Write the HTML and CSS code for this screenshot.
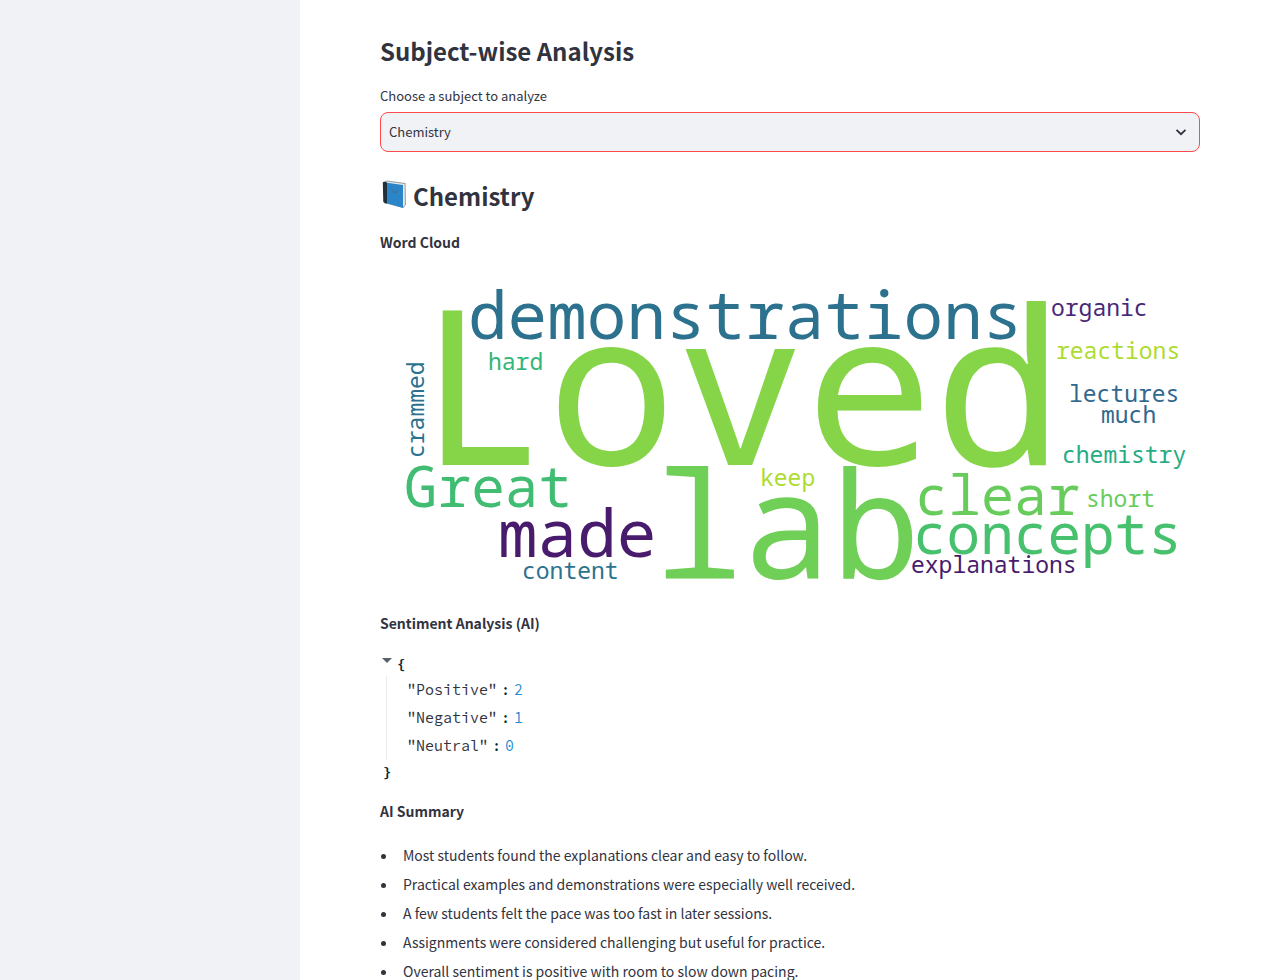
FILE: index.html
```html
<!DOCTYPE html>
<html lang="en">
<head>
    <meta charset="UTF-8">
    <meta name="viewport" content="width=device-width, initial-scale=1.0">
    <title>Subject-wise Analysis</title>
    <link rel="stylesheet" href="styles.css">
</head>
<body>
    <div class="app">
        <aside class="sidebar"></aside>
        <main class="content">
            <h2>Subject-wise Analysis</h2>

            <div class="field">
                <label for="subject">Choose a subject to analyze</label>
                <div class="select-box">
                    <select id="subject">
                        <option selected>Chemistry</option>
                    </select>
                    <svg class="chevron" viewBox="0 0 16 16" aria-hidden="true">
                        <path d="M3.5 5.8L8 10.2l4.5-4.4" />
                    </svg>
                </div>
            </div>

            <h2 class="subject-title">
                <svg class="book" viewBox="0 0 28 32" aria-hidden="true">
                    <path fill="#9aa3a8" d="M3 3l4-1.600L25.600 4l.4 21.500-2.500 3.500L4 24z" />
                    <path fill="#e8ecee" d="M6 2.600L24.500 5l.3 21-1.500 1.500L6 22z" />
                    <path fill="#2a86c8" d="M5.500 3.500l17.500 2.600v23L5.800 24z" />
                    <path fill="#22303c" d="M2.800 3.200l3-.4 1.200 1v20.500l-1.500.3-2.200-1.600z" />
                    <path fill="none" stroke="#3d6f92" d="M10.500 9.500l3 1.500m2 1l3-.5M12 12.500l5 1.500" />
                </svg>
                Chemistry
            </h2>

            <p class="section-title">Word Cloud</p>
            <svg class="cloud" viewBox="0 1 820 326" role="img" aria-label="Word cloud">
                <text class="lime" x="38" y="195" font-size="215">Loved</text>
                <text class="teal" x="88" y="69" font-size="66">demonstrations</text>
                <text class="leaf" x="274" y="309" font-size="148">lab</text>
                <text class="green" x="24" y="237" font-size="56">Great</text>
                <text class="purple" x="118" y="287" font-size="66">made</text>
                <text class="fern" x="535" y="245" font-size="55">clear</text>
                <text class="emerald" x="533" y="284" font-size="56">concepts</text>
                <text class="indigo" x="671" y="46" font-size="23">organic</text>
                <text class="yellow" x="676" y="89" font-size="23">reactions</text>
                <text class="blue" x="689" y="132" font-size="23">lectures</text>
                <text class="blue" x="721" y="153" font-size="23">much</text>
                <text class="sea" x="682" y="193" font-size="23">chemistry</text>
                <text class="fern" x="706" y="237" font-size="23">short</text>
                <text class="purple" x="531" y="303" font-size="23">explanations</text>
                <text class="yellow" x="380" y="216" font-size="23">keep</text>
                <text class="jade" x="108" y="100" font-size="23">hard</text>
                <text class="teal" x="142" y="309" font-size="23">content</text>
                <text class="teal" transform="translate(44 188) rotate(-90)" font-size="23">crammed</text>
            </svg>

            <p class="section-title">Sentiment Analysis (AI)</p>
            <details class="json" open>
                <summary><span class="arrow"></span><span class="brace">{</span></summary>
                <ul class="json-body">
                    <li><span class="key">"Positive"</span><span>:</span><span class="num">2</span></li>
                    <li><span class="key">"Negative"</span><span>:</span><span class="num">1</span></li>
                    <li><span class="key">"Neutral"</span><span>:</span><span class="num">0</span></li>
                </ul>
                <div class="brace brace-end">}</div>
            </details>

            <p class="section-title">AI Summary</p>
            <ul class="summary">
                <li>Most students found the explanations clear and easy to follow.</li>
                <li>Practical examples and demonstrations were especially well received.</li>
                <li>A few students felt the pace was too fast in later sessions.</li>
                <li>Assignments were considered challenging but useful for practice.</li>
                <li>Overall sentiment is positive with room to slow down pacing.</li>
            </ul>
        </main>
    </div>
</body>
</html>
```
FILE: styles.css
```css
* {
    box-sizing: border-box;
}
body {
    margin: 0;
    font-family: "Source Sans Pro", "Noto Sans CJK SC", sans-serif;
    font-size: 14px;
    line-height: 24px;
    color: #31333f;
    background: #fff;
}
.app {
    display: flex;
    height: 100vh;
}
.sidebar {
    flex: 0 0 300px;
    background: #f0f2f6;
}
.content {
    flex: 1;
    min-width: 0;
    padding: 31px 80px;
    overflow-y: auto;
    scrollbar-width: none;
}
h2 {
    margin: 0;
    font-size: 24px;
    line-height: 40px;
    font-weight: 700;
}
.subject-title {
    display: flex;
    gap: 5px;
}
.book {
    width: 28px;
    height: 32px;
    margin-top: 3px;
}
/* Subject picker */
.field {
    margin: 13px 0 24px;
}
.field label {
    display: block;
    margin-bottom: 4px;
    font-size: 13px;
}
.select-box {
    display: grid;
    align-items: center;
}
.select-box select,
.chevron {
    grid-area: 1 / 1;
}
.select-box select {
    width: 100%;
    height: 40px;
    padding: 0 8px 2px;
    font-family: inherit;
    font-size: 13px;
    color: inherit;
    background: #f0f2f6;
    border: 1px solid #ff4b4b;
    border-radius: 8px;
    outline: none;
    appearance: none;
}
.chevron {
    justify-self: end;
    width: 16px;
    height: 16px;
    margin-right: 11px;
    fill: none;
    stroke: #31333f;
    stroke-width: 1.8;
    pointer-events: none;
}
.section-title {
    margin: 14px 0 17px;
    font-weight: 700;
}
/* Word cloud */
.cloud {
    display: block;
    width: 100%;
    font-family: "Droid Sans Mono", "Noto Sans Mono", "DejaVu Sans Mono", monospace;
}
.lime { fill: #86d549; }
.teal { fill: #2c728e; }
.leaf { fill: #70cf57; }
.green { fill: #40bd72; }
.purple { fill: #481b6d; }
.fern { fill: #67cc5c; }
.emerald { fill: #48c16e; }
.indigo { fill: #482878; }
.yellow { fill: #addc30; }
.blue { fill: #31688e; }
.sea { fill: #25ac82; }
.jade { fill: #32b67a; }
/* JSON tree */
.json {
    margin-bottom: 15px;
    font-family: "Source Code Pro", "Noto Sans Mono CJK SC", "DejaVu Sans Mono", monospace;
    font-size: 15px;
    color: #002b36;
}
.json summary {
    display: flex;
    gap: 5px;
    list-style: none;
    cursor: pointer;
}
.arrow {
    margin: 6px 0 0 2px;
    border: 5px solid transparent;
    border-top-color: #586069;
}
.brace {
    font-size: 14px;
    font-weight: 700;
}
.brace-end {
    padding-left: 3px;
}
.json-body {
    margin: 0 0 0 6px;
    padding: 0 0 0 20px;
    border-left: 1px solid #ebebeb;
    list-style: none;
}
.json-body li {
    display: flex;
    gap: 4px;
    line-height: 28px;
}
.key {
    color: #31333f;
}
.num {
    color: #268bd2;
}
/* Summary list */
.summary {
    margin: 20px 0 0;
    padding-left: 18px;
}
.summary li {
    margin-bottom: 5px;
    padding-left: 5px;
}
```
